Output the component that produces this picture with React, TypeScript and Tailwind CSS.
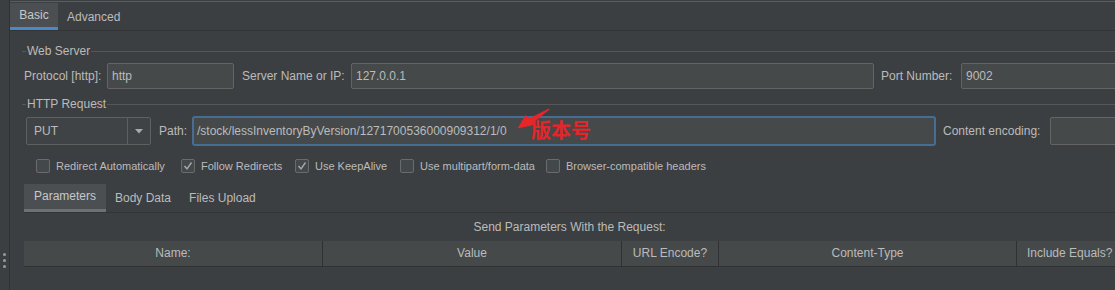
const font = { fontFamily: '"Liberation Sans", Arial, sans-serif' };

function Legend({ title }: { title: string }) {
  return (
    <div className="flex items-center h-[14px]">
      <div className="w-[4px] h-px bg-[#555759]" />
      <span className="px-[1px] text-[12px] leading-none text-[#bbbbbb]">{title}</span>
      <div className="flex-1 h-px bg-[#555759]" />
    </div>
  );
}

function Field({ value, className }: { value?: string; className: string }) {
  return (
    <div
      className={`h-[26px] shrink-0 rounded-[2px] border border-[#646464] bg-[#45494a] px-[4px] flex items-center text-[12px] text-[#bbbbbb] ${className}`}
    >
      {value}
    </div>
  );
}

function Check({ label, checked }: { label: string; checked?: boolean }) {
  return (
    <div className="flex items-center gap-[6px]">
      <div className="w-[14px] h-[14px] shrink-0 rounded-[2px] border border-[#6b6b6b] bg-[#43494a] flex items-center justify-center">
        {checked ? (
          <svg width="10" height="10" viewBox="0 0 10 10">
            <path d="M1.5 5 L4 7.8 L8.5 1.5" fill="none" stroke="#a8a8a8" strokeWidth="1.4" />
          </svg>
        ) : null}
      </div>
      <span className="text-[11px] text-[#bbbbbb] whitespace-nowrap">{label}</span>
    </div>
  );
}

const columns = [
  { label: "Name:", w: "w-[298px]" },
  { label: "Value", w: "w-[299px]" },
  { label: "URL Encode?", w: "w-[97px]" },
  { label: "Content-Type", w: "w-[298px]" },
  { label: "Include Equals?", w: "w-[120px]" },
];

export default function App() {
  return (
    <div className="relative w-[1115px] h-[290px] overflow-hidden bg-[#3c3f41] flex" style={font}>
      {/* left splitter */}
      <div className="w-[10px] shrink-0 border-r border-[#2f3133] flex flex-col items-center justify-end pb-[22px] gap-[3px]">
        <div className="w-[3px] h-[3px] rounded-full bg-[#9a9a9a]" />
        <div className="w-[3px] h-[3px] rounded-full bg-[#9a9a9a]" />
        <div className="w-[3px] h-[3px] rounded-full bg-[#9a9a9a]" />
      </div>

      <div className="flex-1 flex flex-col min-w-0">
        <div className="h-[2px] border-b border-[#5b5e60]" />

        {/* main tabs */}
        <div className="h-[29px] flex items-stretch border-b border-[#323435] pt-px">
          <div className="w-[48px] bg-[#4b4f52] border-b-[3px] border-[#4a88c7] flex items-center justify-center text-[12px] text-[#c8c8c8]">
            Basic
          </div>
          <div className="px-[9px] flex items-center text-[12px] text-[#bbbbbb]">Advanced</div>
        </div>

        <div className="pl-[12px] pt-[13px]">
          <Legend title="Web Server" />
          <div className="mt-[5px] flex items-center pl-[2px]">
            <span className="shrink-0 text-[12px] text-[#bbbbbb] w-[83px]">Protocol [http]:</span>
            <Field value="http" className="w-[127px]" />
            <span className="shrink-0 text-[12px] text-[#bbbbbb] ml-[8px] w-[109px]">Server Name or IP:</span>
            <Field value="127.0.0.1" className="w-[523px]" />
            <span className="shrink-0 text-[12px] text-[#bbbbbb] ml-[7px] w-[80px]">Port Number:</span>
            <Field value="9002" className="w-[160px]" />
          </div>

          <div className="mt-[8px]">
            <Legend title="HTTP Request" />
          </div>
          <div className="mt-[5px] flex items-center pl-[4px]">
            <div className="w-[125px] h-[28px] shrink-0 rounded-[2px] border border-[#5e6060] bg-[#404345] flex">
              <div className="flex-1 flex items-center pl-[7px] text-[12px] text-[#bbbbbb]">PUT</div>
              <div className="w-[23px] border-l border-[#5e6060] flex items-center justify-center">
                <svg width="8" height="5" viewBox="0 0 8 5">
                  <path d="M0 0 H8 L4 4.5 Z" fill="#a9a9a9" />
                </svg>
              </div>
            </div>
            <span className="shrink-0 ml-[8px] w-[33px] text-[12px] text-[#bbbbbb]">Path:</span>
            <div className="w-[744px] h-[30px] shrink-0 rounded-[3px] border-2 border-[#466d94] bg-[#45494a] pl-[3px] flex items-center text-[12px] text-[#bbbbbb]">
              /stock/lessInventoryByVersion/1271700536000909312/1/0
            </div>
            <span className="shrink-0 ml-[7px] w-[107px] text-[12px] text-[#bbbbbb]">Content encoding:</span>
            <Field className="w-[80px] h-[28px]" />
          </div>

          <div className="mt-[12px] flex items-center pl-[14px]">
            <div className="w-[145px] shrink-0"><Check label="Redirect Automatically" /></div>
            <div className="w-[114px] shrink-0"><Check label="Follow Redirects" checked /></div>
            <div className="w-[105px] shrink-0"><Check label="Use KeepAlive" checked /></div>
            <div className="w-[146px] shrink-0"><Check label="Use multipart/form-data" /></div>
            <Check label="Browser-compatible headers" />
          </div>

          {/* sub tabs */}
          <div className="mt-[9px] ml-[2px] h-[29px] flex items-stretch border-b border-[#323435]">
            <div className="w-[82px] bg-[#4b4f52] border-b-[3px] border-[#6d7173] flex items-center justify-center text-[12px] text-[#c8c8c8]">
              Parameters
            </div>
            <div className="px-[9px] flex items-center text-[12px] text-[#bbbbbb]">Body Data</div>
            <div className="pl-[9px] flex items-center text-[12px] text-[#bbbbbb]">Files Upload</div>
          </div>

          <div className="ml-[2px] h-[28px] flex items-center justify-center text-[12px] text-[#bbbbbb]">
            Send Parameters With the Request:
          </div>
          <div className="ml-[2px] h-[26px] flex bg-[#45494a] border-b border-[#2f3133]">
            {columns.map((c, i) => (
              <div
                key={c.label}
                className={`${c.w} shrink-0 flex items-center justify-center text-[12px] text-[#bbbbbb] ${
                  i > 0 ? "border-l border-[#2f3133]" : ""
                } ${i === 4 ? "justify-start pl-[10px]" : ""}`}
              >
                {c.label}
              </div>
            ))}
          </div>
        </div>
      </div>

      {/* annotation */}
      <svg className="absolute left-[510px] top-[104px]" width="45" height="30" viewBox="0 0 45 30">
        <path d="M18 15 L39 4.5 L39.6 5.6 L22 19.5 Z" fill="#e8262a" />
        <path d="M7.5 24.5 L15.5 11 L26 20.5 Z" fill="#e8262a" />
      </svg>
      <span
        className="absolute left-[531px] top-[120px] text-[20px] font-bold leading-none text-[#e3262b]"
        style={{ fontFamily: '"Noto Sans CJK SC", sans-serif' }}
      >
        版本号
      </span>
    </div>
  );
}
